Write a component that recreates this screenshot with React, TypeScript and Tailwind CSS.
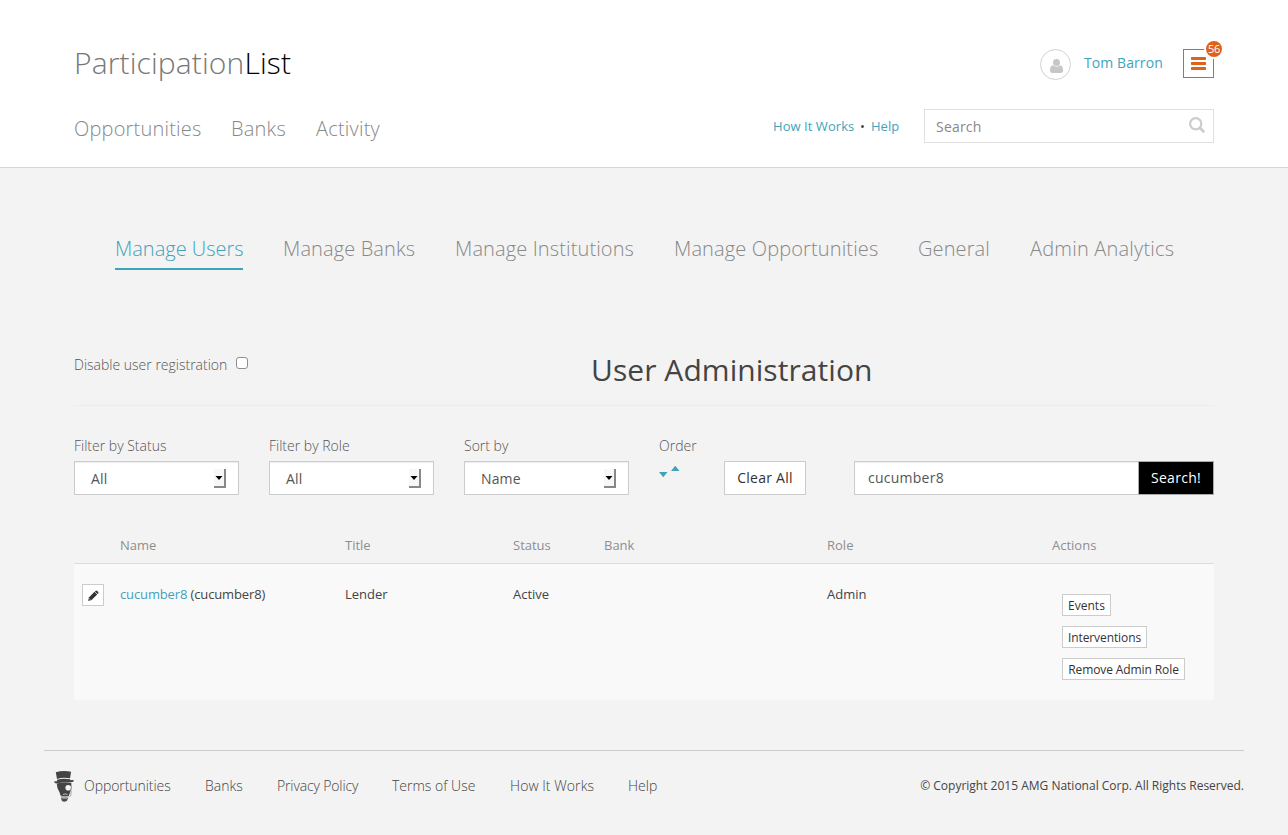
import React from "react";

const tabs = [
  { label: "Manage Users", width: "w-[128px]", active: true },
  { label: "Manage Banks", width: "w-[132px] tracking-[0.12px]" },
  { label: "Manage Institutions", width: "w-[179px] tracking-[0.12px]" },
  { label: "Manage Opportunities", width: "w-[204px] tracking-[0.13px]" },
  { label: "General", width: "w-[72px] tracking-[0.1px]" },
  { label: "Admin Analytics", width: "w-[145px] tracking-[0.2px]" },
];

const filters = [
  { label: "Filter by Status", value: "All" },
  { label: "Filter by Role", value: "All" },
  { label: "Sort by", value: "Name" },
];

const footerLinks = [
  { label: "Opportunities", width: "w-[121px] tracking-[-0.06px]" },
  { label: "Banks", width: "w-[72px]" },
  { label: "Privacy Policy", width: "w-[115px] tracking-[-0.14px]" },
  { label: "Terms of Use", width: "w-[118px]" },
  { label: "How It Works", width: "w-[118px] tracking-[0.06px]" },
  { label: "Help", width: "w-[60px]" },
];

function UserIcon() {
  return (
    <svg width="13" height="14" viewBox="0 0 13 14" fill="#c6c6c6">
      <circle cx="6.5" cy="3.6" r="3.5" />
      <path d="M3 6.3C1 6.7 0 8.400 0 11.200C0 13 .8 14 2.400 14H10.600C12.200 14 13 13 13 11.200C13 8.400 12 6.700 10 6.300C8.200 8.200 4.800 8.200 3 6.300Z" />
    </svg>
  );
}

function SearchIcon() {
  return (
    <svg width="16" height="16" viewBox="0 0 16 16" fill="none" stroke="#cccccc">
      <circle cx="6.7" cy="6.700" r="5.600" strokeWidth="2.200" />
      <path d="M10.800 10.800L15.200 15.200" strokeWidth="2.800" />
    </svg>
  );
}

function PencilIcon() {
  return (
    <svg width="11" height="11" viewBox="0 0 11 11" fill="#333333">
      <path d="M7.400 .9Q8.300 0 9.200 .9L10.100 1.800Q11 2.700 10.100 3.600L9.600 4.100L6.900 1.400Z" />
      <path d="M6.500 1.800L9.200 4.500L3.600 10.100L.2 10.900L.9 7.400Z" />
      <path d="M1.300 8.500L2.500 9.700" stroke="#ffffff" strokeWidth=".6" />
    </svg>
  );
}

function HatLogo() {
  return (
    <svg width="20" height="31" viewBox="0 0 20 31">
      <path d="M1.800 1.300Q9 -1 17.100 .8L16 7.300Q9 5.900 3 7.900Z" fill="#444444" />
      <path d="M3 8.700Q9 6.900 16.200 8.200L16.400 9.200Q20 8.700 20 10Q18.300 11.800 15 11.200Q8 10.300 3.500 12.600Q1 12.500 0 10.900Q0 9.900 3.200 10.300Z" fill="#444444" />
      <path d="M2.800 12.800Q9 10.500 17.300 11.900Q18.300 17 16 21.500L14.800 25Q10.500 26 6.500 24.500L5.600 21.500Q2.700 17 2.800 12.800Z" fill="#444444" />
      <circle cx="14.200" cy="16.800" r="2.800" fill="#f3f3f3" />
      <path d="M17 17V24L15.500 26" fill="none" stroke="#888888" strokeWidth=".7" />
      <path d="M6.800 24.700Q10.500 26 14.500 24.900L14.200 27.200Q10 28 7 27Z" fill="#aaaaaa" />
      <path d="M6.900 27Q10.500 28.200 14.200 27L12.800 30Q10 31.500 8 30Z" fill="#4c4c4c" />
      <path d="M9 23.500Q11 22.400 13.500 23.500" fill="none" stroke="#dddddd" strokeWidth=".8" />
    </svg>
  );
}

function SelectBox({ label, value }: { label: string; value: string }) {
  return (
    <div className="w-[165px]">
      <div className="h-[26px] pt-px text-[14px] leading-[20px] font-light text-[#555555]">{label}</div>
      <button className="flex h-[34px] w-full items-start justify-between border border-[#cccccc] bg-white pt-[7px] pr-[12px] pl-4 text-[14px] leading-[20px] text-[#555555] shadow-[inset_0_1px_1px_rgba(0,0,0,0.075)]">
        <span className="tracking-[0.15px]">{value}</span>
        <span className="flex h-[19px] w-[12px] items-start justify-center border-r-2 border-b-2 border-[#888888] bg-[#f7f7f5] pt-[7px]">
          <svg className="shrink-0" width="8" height="4" viewBox="0 0 8 4">
            <path d="M.5 0H7.500L4 4Z" fill="#000000" />
          </svg>
        </span>
      </button>
    </div>
  );
}

export default function App() {
  return (
    <div className="h-[835px] w-[1288px] overflow-hidden bg-[#f3f3f3] font-['Open_Sans',sans-serif] text-[13px] leading-[20px] text-[#444444]">
      <header className="h-[168px] border-b border-[#d7d7d7] bg-white px-[74px]">
        <div className="flex h-[109px] justify-between">
          <h1 className="pt-[42px] text-[30px] leading-[42px] font-light tracking-[0.12px] text-[#777777]">
            Participation<span className="text-black">List</span>
          </h1>
          <div className="flex items-start pt-[49px]">
            <span className="flex size-[31px] items-center justify-center rounded-full border border-[#d2d2d2] pt-[2px] pl-px">
              <UserIcon />
            </span>
            <a className="mt-[4px] ml-[13px] w-[99px] text-[14px] leading-[20px] tracking-[0.08px] whitespace-nowrap text-[#3fa3bb]">Tom Barron</a>
            <button className="relative flex h-[29px] w-[31px] items-center justify-center border border-[#e0611c]">
              <svg width="15" height="13" viewBox="0 0 15 13" fill="#e0611c">
                <path d="M.5 0H14.500L15 .5V2.500L14.500 3H.5L0 2.500V.5ZM.5 5H14.500L15 5.500V7.500L14.500 8H.5L0 7.500V5.500ZM.5 10H14.500L15 10.500V12.500L14.500 13H.5L0 12.500V10.500Z" />
              </svg>
              <span className="absolute -top-[11px] -right-[11px] flex size-[20px] items-center justify-center rounded-full border-2 border-white bg-[#e0611c] pb-px text-[11px] leading-none tracking-[-0.3px] text-white">56</span>
            </button>
          </div>
        </div>
        <div className="flex justify-between">
          <nav className="flex gap-[30px] pt-[6px] text-[20px] leading-[28px] font-light tracking-[0.2px] text-[#888888]">
            <a className="w-[127px]">Opportunities</a>
            <a className="w-[55px]">Banks</a>
            <a>Activity</a>
          </nav>
          <div className="flex">
            <div className="flex w-[151px] pt-[7px] whitespace-nowrap text-[#3fa3bb]">
              <a className="w-[87px] tracking-[0.05px]">How It Works</a>
              <span className="w-[11px] text-[#444444]">•</span>
              <a>Help</a>
            </div>
            <div className="flex h-[34px] w-[290px] justify-between border border-[#e0e0e0] pt-[7px] pr-[8px] pl-[11px] text-[14px] leading-[20px] text-[#888888]">
              <span className="tracking-[0.2px]">Search</span>
              <SearchIcon />
            </div>
          </div>
        </div>
      </header>

      <nav className="flex h-[185px] gap-10 pt-[66px] pl-[115px] text-[20px] leading-[28px] font-light whitespace-nowrap text-[#888888]">
        {tabs.map((tab) => (
          <a key={tab.label} className={`h-[36px] pt-px ${tab.width} ${tab.active ? "border-b-2 border-[#3fa3bb] text-[#3fa3bb]" : ""}`}>
            {tab.label}
          </a>
        ))}
      </nav>

      <main className="mx-[74px]">
        <div className="flex h-[53px] border-b border-[#ececec]">
          <label className="flex w-[517px] pt-[2px] text-[14px] leading-[20px] font-light text-[#555555]">
            <span className="w-[162px]">Disable user registration</span>
            <span className="mt-[2px] size-[12px] rounded-[3px] border border-[#8f8f8f] bg-white" />
          </label>
          <h2 className="-mt-[4px] text-[30px] leading-[42px] tracking-[0.06px] whitespace-nowrap">User Administration</h2>
        </div>

        <div className="mt-[29px] flex h-[94px] gap-[30px]">
          {filters.map((filter) => (
            <SelectBox key={filter.label} label={filter.label} value={filter.value} />
          ))}
          <div className="w-[35px]">
            <div className="h-[30px] pt-px text-[14px] leading-[20px] font-light whitespace-nowrap text-[#555555]">Order</div>
            <svg width="21" height="13" viewBox="0 0 21 13" fill="#3fa3bb">
              <path d="M0 7H8.500L4.250 12.200ZM12 6L16.250 .8L20.500 6Z" />
            </svg>
          </div>
          <button className="mt-[26px] h-[34px] w-[82px] border border-[#cccccc] bg-white text-[14px] leading-[20px] tracking-[0.25px] text-[#333333]">Clear All</button>
          <div className="mt-[26px] ml-[18px] flex h-[34px] w-[360px] text-[14px] leading-[20px]">
            <div className="w-[284px] border border-r-0 border-[#cccccc] bg-white pt-[6px] pl-[13px] tracking-[0.25px] text-[#555555] shadow-[inset_0_1px_1px_rgba(0,0,0,0.075)]">cucumber8</div>
            <button className="w-[76px] border border-[#aaaaaa] bg-black tracking-[0.3px] text-white">Search!</button>
          </div>
        </div>

        <table className="w-full table-fixed border-separate border-spacing-0 text-left">
          <colgroup>
            <col className="w-[38px]" />
            <col className="w-[225px]" />
            <col className="w-[168px]" />
            <col className="w-[91px]" />
            <col className="w-[223px]" />
            <col className="w-[225px]" />
            <col />
          </colgroup>
          <thead>
            <tr className="align-top text-[#8e8e8e]">
              {["", "Name", "Title", "Status", "Bank", "Role", "Actions"].map((heading, index) => (
                <th key={index} className="h-[35px] border-b border-[#dddddd] px-[8px] pt-[6px] pb-0 font-normal">{heading}</th>
              ))}
            </tr>
          </thead>
          <tbody>
            <tr className="h-[136px] bg-[#f9f9f9] align-top">
              <td className="pt-[20px] pl-[8px]">
                <button className="flex size-[22px] items-center justify-center border border-[#cccccc] bg-white">
                  <PencilIcon />
                </button>
              </td>
              <td className="px-[8px] pt-[20px] tracking-[-0.13px] whitespace-nowrap"><a className="text-[#3fa3bb]">cucumber8</a> (cucumber8)</td>
              <td className="px-[8px] pt-[20px]">Lender</td>
              <td className="px-[8px] pt-[20px]">Active</td>
              <td />
              <td className="px-[8px] pt-[20px]">Admin</td>
              <td className="pt-[30px] pl-[18px]">
                <div className="flex flex-col items-start gap-[10px] text-[12px] leading-[18px] whitespace-nowrap text-[#333333]">
                  <button className="h-[22px] w-[49px] border border-[#cccccc] bg-white pt-px">Events</button>
                  <button className="h-[22px] w-[85px] border border-[#cccccc] bg-white pt-px tracking-[-0.1px]">Interventions</button>
                  <button className="h-[22px] w-[123px] border border-[#cccccc] bg-white pt-px tracking-[-0.1px]">Remove Admin Role</button>
                </div>
              </td>
            </tr>
          </tbody>
        </table>
      </main>

      <footer className="mx-[44px] mt-[50px] flex h-[85px] justify-between border-t border-[#cccccc] pt-[20px]">
        <div className="flex pl-[10px] text-[14px] leading-[20px] font-light whitespace-nowrap">
          <div className="w-[30px]"><HatLogo /></div>
          <nav className="flex pt-[5px]">
            {footerLinks.map((link) => (
              <a key={link.label} className={link.width}>{link.label}</a>
            ))}
          </nav>
        </div>
        <p className="pt-[5px] text-[12px] leading-[20px]">© Copyright 2015 AMG National Corp. All Rights Reserved.</p>
      </footer>
    </div>
  );
}
